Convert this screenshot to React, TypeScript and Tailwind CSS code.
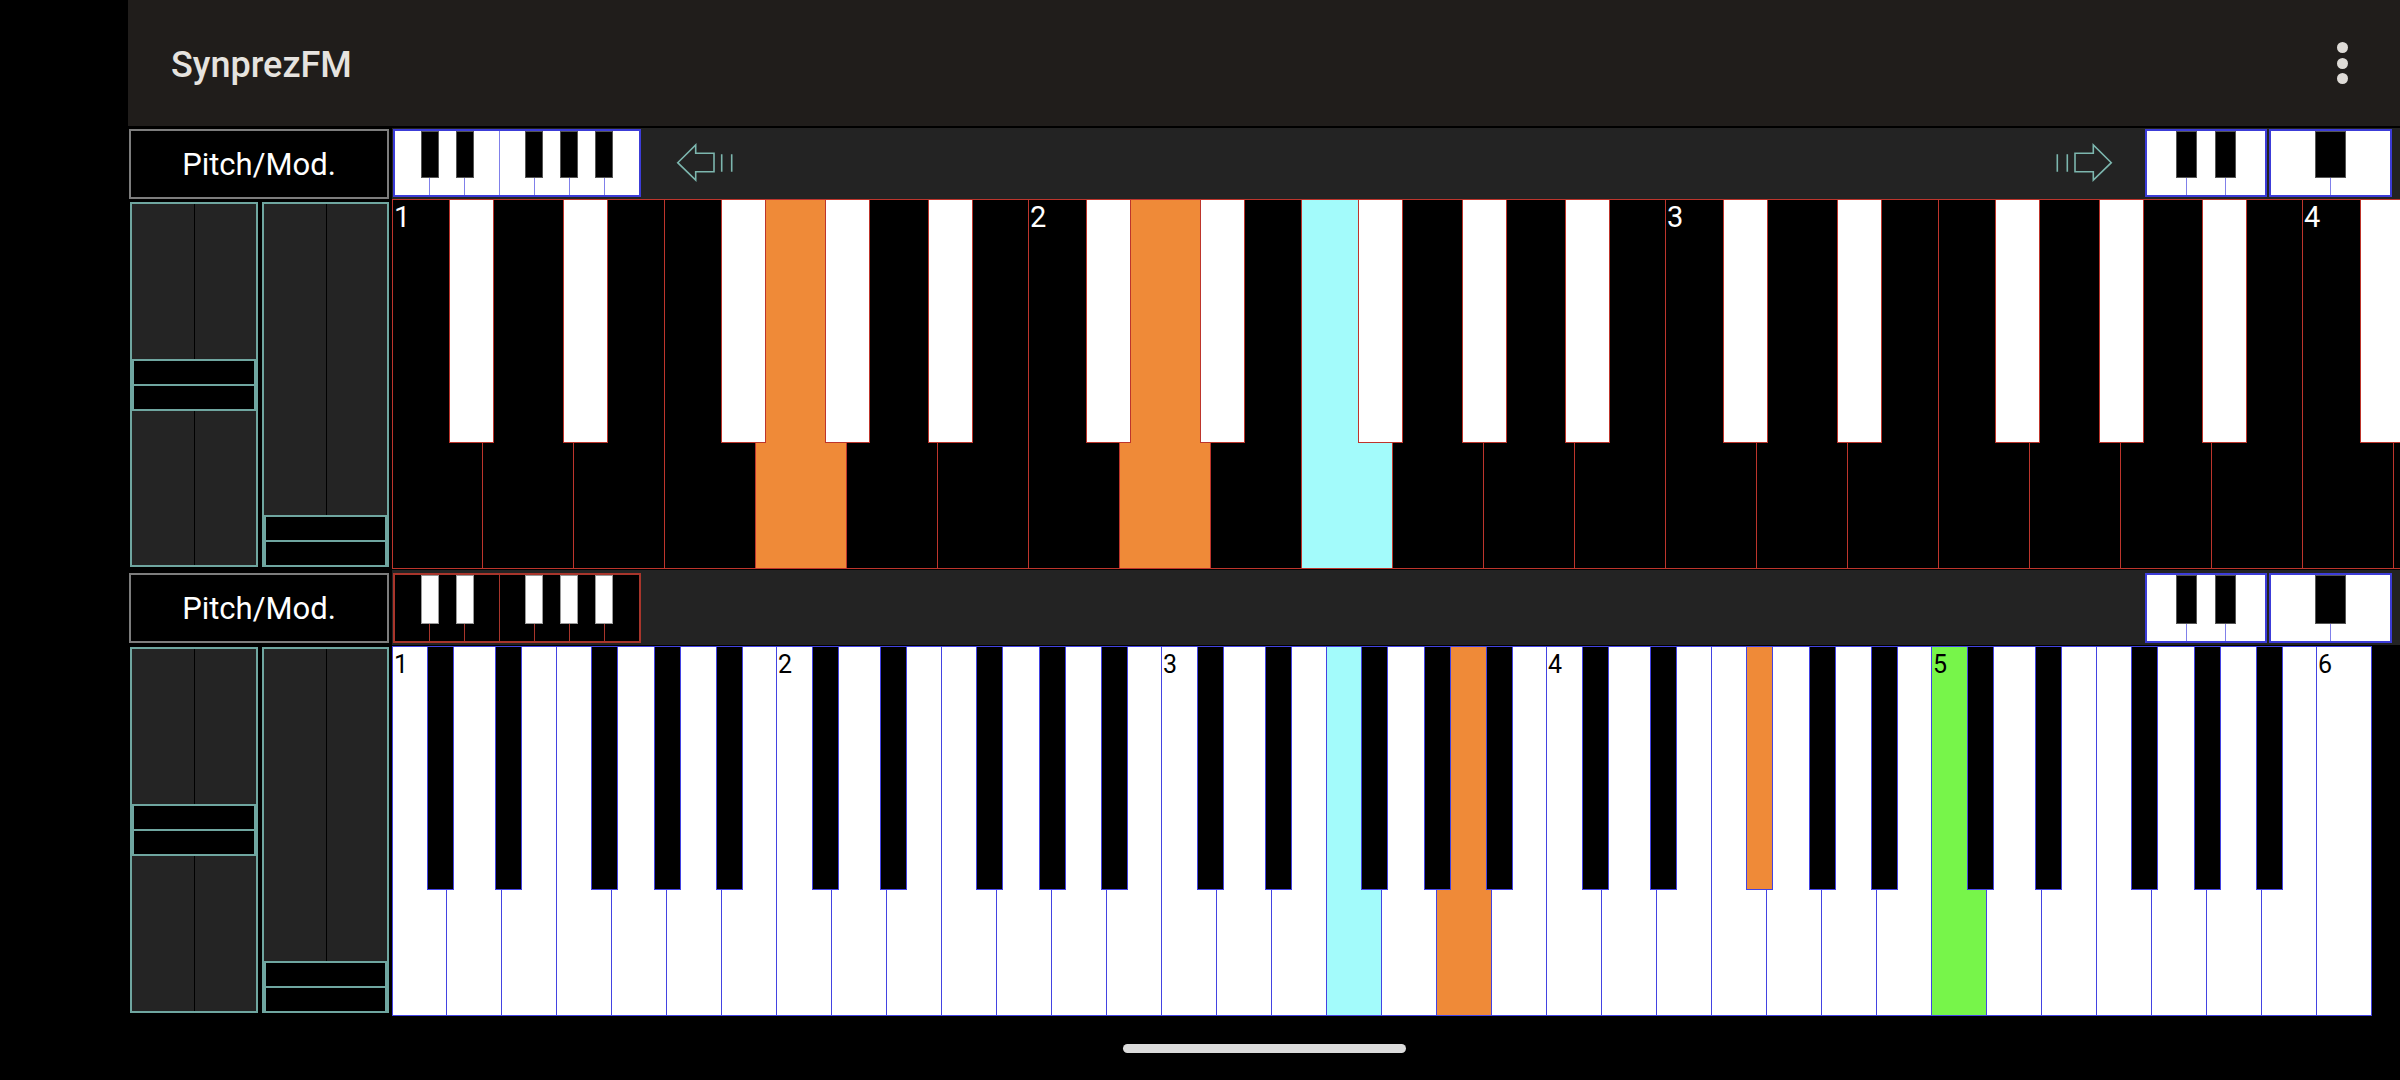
import React from 'react';

const WHITE_SEMIS = [0, 2, 4, 5, 7, 9, 11];
const BLACKS = [
  { semi: 1, pos: 0.63 },
  { semi: 3, pos: 1.88 },
  { semi: 6, pos: 3.62 },
  { semi: 8, pos: 4.76 },
  { semi: 10, pos: 5.89 },
];

const ORANGE = 'bg-[#ef8a38]';
const CYAN = 'bg-[#a3fbfb]';
const GREEN = 'bg-[#77f54a]';

type KbProps = {
  whiteW: number;
  count: number;
  keyClass: string;
  widthClass: string;
  inverted: boolean;
  pressed: Record<string, string>;
  blackW: number;
  labelClass: string;
  clipBlacks?: boolean;
};

function BigKeyboard({ whiteW, count, keyClass, widthClass, inverted, pressed, blackW, labelClass, clipBlacks }: KbProps) {
  const line = inverted ? 'border-[#bd352c]' : 'border-[#4343e2]';
  const whiteBase = inverted ? 'bg-black' : 'bg-white';
  const blackBase = inverted ? 'bg-white' : 'bg-black';
  const whites = Array.from({ length: count }, (_, i) => ({
    i,
    octave: Math.floor(i / 7),
    semi: WHITE_SEMIS[i % 7],
  }));
  const octaves = Math.ceil(count / 7);
  const blacks: { key: string; left: number; cls: string }[] = [];
  for (let o = 0; o < octaves; o++) {
    for (const b of BLACKS) {
      const left = (o * 7 + b.pos) * whiteW;
      const limit = count * whiteW;
      const fits = clipBlacks ? left < limit : left + blackW <= limit;
      if (fits) {
        const k = `${o}-${b.semi}`;
        blacks.push({ key: k, left, cls: pressed[k] ?? blackBase });
      }
    }
  }
  return (
    <div className={`relative h-full overflow-hidden shrink-0 ${widthClass}`}>
      <div className="flex h-full">
        {whites.map((w) => {
          const k = `${w.octave}-${w.semi}`;
          const bg = pressed[k] ?? whiteBase;
          return (
            <div
              key={w.i}
              className={`h-full shrink-0 border-y border-r ${w.i === 0 ? 'border-l' : ''} ${line} ${bg} ${keyClass}`}
            >
              {w.semi === 0 && <span className={`block leading-none ${labelClass}`}>{w.octave + 1}</span>}
            </div>
          );
        })}
      </div>
      {blacks.map((b) => (
        <div
          key={b.key}
          className={`absolute top-0 h-[244px] border ${line} ${b.cls}`}
          style={{ left: b.left, width: blackW }}
        />
      ))}
    </div>
  );
}

type MiniProps = {
  whites: number;
  blacks: number[];
  bw: number;
  dark: boolean;
  className: string;
};

function MiniKb({ whites, blacks, bw, dark, className }: MiniProps) {
  return (
    <div
      className={`relative h-full flex shrink-0 border-2 ${dark ? 'border-[#a8352b] bg-black' : 'border-[#3c3cd8] bg-white'} ${className}`}
    >
      {Array.from({ length: whites }).map((_, i) => (
        <div
          key={i}
          className={`flex-1 h-full ${i < whites - 1 ? 'border-r' : ''} ${dark ? 'border-[#a8352b]' : 'border-[#8080ea]'}`}
        />
      ))}
      {blacks.map((b) => (
        <div
          key={b}
          className={`absolute top-0 h-[74%] border ${dark ? 'bg-white border-[#9a9a9a]' : 'bg-black border-[#555555]'}`}
          style={{ left: `calc(${(b / whites) * 100}% - ${bw / 2}px)`, width: bw }}
        />
      ))}
    </div>
  );
}

function Arrow({ flip }: { flip?: boolean }) {
  return (
    <svg
      width="60"
      height="40"
      viewBox="0 0 60 40"
      className={flip ? '-scale-x-100' : ''}
      fill="none"
      stroke="#7cb6ae"
      strokeWidth="1.6"
    >
      <path d="M1.7 19.7 L19.7 2 V10.3 H38 V28.7 H19.7 V37 Z" strokeLinejoin="miter" />
      <path d="M45.7 11.3 V28.7 M55.7 11.3 V28.7" />
    </svg>
  );
}

function Slider({ className, bottom }: { className: string; bottom?: boolean }) {
  return (
    <div className={`relative h-full shrink-0 border-2 border-[#6fa6a0] bg-[#242424] ${className}`}>
      <div className="absolute left-1/2 top-0 h-full w-px bg-black" />
      <div
        className={`absolute left-0 right-0 flex flex-col ${bottom ? 'bottom-[-2px]' : 'top-1/2 -translate-y-1/2'}`}
      >
        <div className="h-[27px] border-2 border-[#6fa6a0] bg-black" />
        <div className="h-[25px] border-2 border-t-0 border-[#6fa6a0] bg-black" />
      </div>
    </div>
  );
}

function PitchBox() {
  return (
    <div className="h-[70px] w-[260px] border-2 border-[#7d7d7d] bg-black flex items-center justify-center">
      <span className="text-[31px] leading-none text-white">Pitch/Mod.</span>
    </div>
  );
}

function RightKbs() {
  return (
    <div className="flex h-full gap-[2px] pr-[8px]">
      <MiniKb whites={3} blacks={[1, 2]} bw={21} dark={false} className="w-[122px]" />
      <MiniKb whites={2} blacks={[1]} bw={31} dark={false} className="w-[123px]" />
    </div>
  );
}

export default function App() {
  return (
    <div className="flex w-[2400px] h-[1080px] bg-black overflow-hidden font-['Roboto',sans-serif]">
      <div className="w-[128px] shrink-0" />
      <div className="flex flex-col w-[2272px]">
        <header className="h-[126px] bg-[#201d1b] flex items-center justify-between pl-[43px] pr-[52px] shrink-0">
          <span className="pt-[3px] text-[36px] leading-none font-medium text-[#e6e3df]">SynprezFM</span>
          <div className="flex flex-col gap-[4.5px]">
            <span className="block w-[11px] h-[11px] rounded-full bg-[#dedbd7]" />
            <span className="block w-[11px] h-[11px] rounded-full bg-[#dedbd7]" />
            <span className="block w-[11px] h-[11px] rounded-full bg-[#dedbd7]" />
          </div>
        </header>
        <div className="h-[2px] bg-black shrink-0" />

        {/* Section 1 */}
        <div className="flex h-[71px] shrink-0">
          <div className="w-[264px] shrink-0 pl-[1px] pr-[3px] pt-[1px]">
            <PitchBox />
          </div>
          <div className="flex flex-1 bg-[#232323] pt-[1px] pb-[2px] pl-[1px]">
            <MiniKb whites={7} blacks={[1, 2, 4, 5, 6]} bw={18} dark={false} className="w-[248px]" />
            <div className="flex flex-1 items-center justify-between pl-[35px] pr-[32px]">
              <Arrow />
              <Arrow flip />
            </div>
            <RightKbs />
          </div>
        </div>
        <div className="flex h-[370px] shrink-0">
          <div className="flex w-[264px] shrink-0 gap-[4px] pl-[2px] pr-[3px] pt-[3px] pb-[2px]">
            <Slider className="w-[128px]" />
            <Slider className="w-[127px]" bottom />
          </div>
          <BigKeyboard
            whiteW={91}
            count={23}
            keyClass="w-[91px]"
            widthClass="w-[2008px]"
            inverted
            clipBlacks
            pressed={{ '0-7': ORANGE, '1-2': ORANGE, '1-5': CYAN }}
            blackW={45}
            labelClass="text-[29px] text-white pl-[1px] pt-[3px]"
          />
        </div>

        {/* Section 2 */}
        <div className="flex h-[77px] shrink-0">
          <div className="w-[264px] shrink-0 pl-[1px] pr-[3px] pt-[4px]">
            <PitchBox />
          </div>
          <div className="flex flex-1 bg-[#232323] my-[1px] pt-[3px] pb-[2px] pl-[1px]">
            <MiniKb whites={7} blacks={[1, 2, 4, 5, 6]} bw={18} dark className="w-[248px]" />
            <div className="flex-1" />
            <RightKbs />
          </div>
        </div>
        <div className="flex h-[370px] shrink-0">
          <div className="flex w-[264px] shrink-0 gap-[4px] pl-[2px] pr-[3px] pt-[1px] pb-[3px]">
            <Slider className="w-[128px]" />
            <Slider className="w-[127px]" bottom />
          </div>
          <BigKeyboard
            whiteW={55}
            count={36}
            keyClass="w-[55px]"
            widthClass="w-[1980px]"
            inverted={false}
            pressed={{ '2-5': CYAN, '2-9': ORANGE, '3-6': ORANGE, '4-0': GREEN }}
            blackW={27}
            labelClass="text-[25px] text-black pl-[1px] pt-[5px]"
          />
        </div>

        <div className="flex-1 flex justify-center pt-[28px]">
          <div className="w-[283px] h-[9px] rounded-full bg-[#dcdcdc]" />
        </div>
      </div>
    </div>
  );
}
